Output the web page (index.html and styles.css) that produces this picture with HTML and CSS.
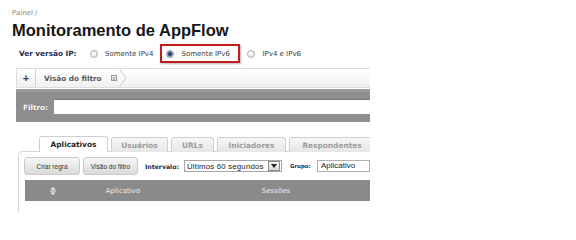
FILE: index.html
```html
<!DOCTYPE html>
<html lang="pt">
<head>
<meta charset="utf-8">
<title>Monitoramento de AppFlow</title>
<link rel="stylesheet" href="styles.css">
</head>
<body>
<div class="page">
  <div class="crumb">Painel /</div>
  <h1 class="title">Monitoramento de AppFlow</h1>
  <div class="iprow">
    <span class="iplabel">Ver versão IP:</span>
    <label class="opt opt-first"><input type="radio" name="ip" class="radio"><span>Somente IPv4</span></label>
    <label class="opt hl"><input type="radio" name="ip" class="radio" checked><span>Somente IPv6</span></label>
    <label class="opt"><input type="radio" name="ip" class="radio"><span>IPv4 e IPv6</span></label>
  </div>
  <div class="main">
    <div class="tabbar">
      <div class="plus">+</div>
      <div class="ftab"><span class="ftab-text">Visão do filtro</span><span class="xbox">×</span></div>
      <svg class="chev" width="8" height="18" viewBox="0 0 8 18"><polyline points="0.5,0 7,9 0.5,18" fill="none" stroke="#c9c9c9" stroke-width="1"/></svg>
    </div>
    <div class="filter">
      <span class="flabel">Filtro:</span>
      <div class="finput"></div>
    </div>
    <div class="tabs">
      <div class="tab active t1">Aplicativos</div>
      <div class="tab t2">Usuários</div>
      <div class="tab t3">URLs</div>
      <div class="tab t4">Iniciadores</div>
      <div class="tab t5">Respondentes</div>
    </div>
    <div class="panel">
      <div class="toolbar">
        <button class="btn b1">Criar regra</button>
        <button class="btn b2">Visão do filtro</button>
        <span class="tlabel">Intervalo:</span>
        <div class="select"><span class="select-text">Últimos 60 segundos</span><span class="arrow"><svg width="6" height="4" viewBox="0 0 6 4"><polygon points="0,0 6,0 3,4" fill="#222"/></svg></span></div>
        <span class="tlabel glabel">Grupo:</span>
        <div class="ginput">Aplicativo</div>
      </div>
      <div class="thead">
        <div class="th c1"><svg width="6" height="8" viewBox="0 0 6 8"><polygon points="3,0 5.5,2.5 0.5,2.5" fill="#f2f2f2"/><rect x="0" y="3.5" width="6" height="1" fill="#f2f2f2"/><polygon points="0.5,5.5 5.5,5.5 3,8" fill="#f2f2f2"/></svg></div>
        <div class="th c2">Aplicativo</div>
        <div class="th c3">Sessões</div>
      </div>
    </div>
  </div>
</div>
</body>
</html>
```
FILE: styles.css
```css
html, body {
  margin: 0;
  padding: 0;
  background: #fff;
}
.page {
  padding-left: 12px;
  font-family: "DejaVu Sans", Verdana, sans-serif;
}
.crumb {
  margin-top: 8px;
  height: 10px;
  line-height: 10px;
  font-size: 7px;
  color: #8a8a8a;
}
.title {
  margin: 3px 0 0 0;
  height: 18px;
  line-height: 18px;
  font-family: "Liberation Sans", Arial, sans-serif;
  font-size: 16.5px;
  font-weight: bold;
  color: #161616;
}
.iprow {
  margin-top: 5px;
  height: 19px;
  display: flex;
  align-items: center;
  padding-left: 7px;
}
.iplabel {
  font-weight: bold;
  font-size: 7.3px;
  color: #1d2c4f;
  width: 58px;
  white-space: nowrap;
}
.opt {
  display: flex;
  align-items: center;
  gap: 7px;
  font-size: 7px;
  color: #3a3a3a;
  white-space: nowrap;
  margin-left: 7px;
}
.opt-first {
  margin-left: 13px;
}
.hl {
  box-sizing: border-box;
  height: 19px;
  width: 80px;
  border: 2px solid #c41b1f;
  padding-left: 4px;
  box-shadow: 1px 1px 2px rgba(0,0,0,0.3);
}
.radio {
  -webkit-appearance: none;
  appearance: none;
  box-sizing: border-box;
  width: 8px;
  height: 8px;
  margin: 0;
  border: 1px solid #b0b0b0;
  border-radius: 50%;
  background: radial-gradient(circle at 40% 40%, #ffffff 0, #e9e9e9 60%, #d4d4d4 100%);
}
.radio:checked {
  border-color: #8b97a6;
  background: radial-gradient(circle, #1f3b63 0, #2a4c78 1.6px, #7d93ad 2.4px, #e6e9ed 3.2px);
}
.main {
  margin-left: 4px;
  width: 354px;
  overflow: hidden;
}
.tabbar {
  box-sizing: border-box;
  margin-top: 5px;
  height: 20px;
  border: 1px solid #dcdcdc;
  border-right: none;
  background: linear-gradient(#ffffff, #f0f0f0);
  display: flex;
  align-items: stretch;
}
.plus {
  width: 18px;
  border-right: 1px solid #d0d0d0;
  display: flex;
  align-items: center;
  justify-content: center;
  font-family: "Liberation Sans", Arial, sans-serif;
  font-weight: bold;
  font-size: 11px;
  color: #444;
}
.ftab {
  display: flex;
  align-items: center;
  width: 83px;
  padding-left: 8px;
  box-sizing: border-box;
}
.ftab-text {
  font-weight: bold;
  font-size: 7.3px;
  color: #5a5a5a;
  white-space: nowrap;
}
.xbox {
  box-sizing: border-box;
  width: 6px;
  height: 6px;
  margin-left: 9px;
  border: 1px solid #999;
  background: #eee;
  font-size: 5px;
  line-height: 4px;
  text-align: center;
  color: #555;
}
.chev {
  display: block;
}
.filter {
  box-sizing: border-box;
  margin-top: 1px;
  height: 33px;
  background: #8e8e8e;
  border-top: 3px solid #9c9c9c;
  display: flex;
  align-items: center;
  padding-left: 7px;
}
.flabel {
  width: 31px;
  font-weight: bold;
  font-size: 7.3px;
  color: #fff;
  text-shadow: 0 0 1px #666;
}
.finput {
  flex: 1;
  height: 14px;
  margin-top: -2px;
  background: #fff;
  border-top: 1px solid #777;
}
.tabs {
  margin-top: 15px;
  margin-left: 23px;
  height: 15px;
  display: flex;
  gap: 3px;
  align-items: flex-end;
  position: relative;
  z-index: 1;
  margin-bottom: -1px;
}
.tab {
  box-sizing: border-box;
  height: 15px;
  flex: 0 0 auto;
  border: 1px solid #cfcfcf;
  border-bottom: none;
  border-radius: 3px 3px 0 0;
  background: linear-gradient(#f7f7f7, #e6e6e6);
  display: flex;
  align-items: center;
  justify-content: center;
  font-weight: bold;
  font-size: 7.4px;
  color: #9c9c9c;
  white-space: nowrap;
}
.tab.active {
  height: 16px;
  background: #fff;
  color: #1e1e1e;
  padding-bottom: 1px;
}
.t1 { width: 69px; }
.t2 { width: 57px; }
.t3 { width: 43px; }
.t4 { width: 69px; }
.t5 { width: 86px; }
.panel {
  margin-left: 2px;
  border: 1px solid #d4d4d4;
  border-right: none;
  border-bottom: none;
  border-radius: 5px 0 0 0;
  height: 60px;
  padding-left: 5px;
}
.toolbar {
  margin-top: 5px;
  height: 18px;
  display: flex;
  align-items: center;
}
.btn {
  box-sizing: border-box;
  height: 18px;
  margin: 0 3px 0 0;
  padding: 0;
  border: 1px solid #cacaca;
  border-radius: 3px;
  background: linear-gradient(#f6f6f6, #dadada);
  font-family: "Liberation Sans", Arial, sans-serif;
  font-size: 6.5px;
  color: #333;
}
.b1 { width: 56px; }
.b2 { width: 55px; }
.tlabel {
  margin-left: 4px;
  font-weight: bold;
  font-size: 6.2px;
  color: #1d2c4f;
  white-space: nowrap;
  width: 39px;
}
.glabel {
  margin-left: 8px;
  font-size: 5.4px;
  width: 27px;
}
.select {
  box-sizing: border-box;
  width: 98px;
  height: 12px;
  border: 1px solid #a4a4a4;
  background: #fff;
  display: flex;
  align-items: center;
  justify-content: space-between;
  padding-left: 2px;
}
.select-text {
  font-family: "Liberation Sans", Arial, sans-serif;
  font-size: 7.8px;
  letter-spacing: 0.2px;
  color: #222;
  white-space: nowrap;
}
.arrow {
  box-sizing: border-box;
  width: 12px;
  height: 10px;
  margin-right: 1px;
  border: 1px solid #8c8c8c;
  background: linear-gradient(#fafafa, #d8d8d8);
  display: flex;
  align-items: center;
  justify-content: center;
}
.arrow svg { display: block; }
.ginput {
  box-sizing: border-box;
  flex: 1;
  height: 12px;
  border: 1px solid #b0b0b0;
  padding-left: 3px;
  font-family: "Liberation Sans", Arial, sans-serif;
  font-size: 8px;
  line-height: 10px;
  color: #222;
  white-space: nowrap;
}
.thead {
  margin-top: 5px;
  margin-left: 1px;
  height: 21px;
  background: #8a8a8a;
  display: flex;
  align-items: center;
  font-size: 7px;
  color: #ececec;
}
.th {
  flex: 0 0 auto;
  text-align: center;
  white-space: nowrap;
}
.th svg { display: inline-block; vertical-align: middle; }
.c1 { width: 55px; }
.c2 { width: 86px; }
.c3 { width: 220px; }
```
